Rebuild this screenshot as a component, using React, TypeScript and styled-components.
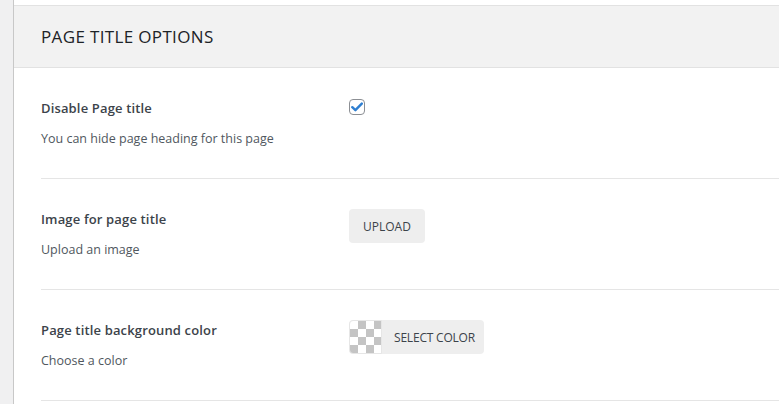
import * as React from "react";
import styled, { createGlobalStyle } from "styled-components";

const GlobalStyle = createGlobalStyle`
  html, body {
    margin: 0;
    padding: 0;
    background: #ffffff;
  }
  body {
    font-family: "Open Sans", "Noto Sans", sans-serif;
    color: #3c434a;
  }
`;

const rows = [
  {
    label: "Disable Page title",
    desc: "You can hide page heading for this page",
    control: "checkbox",
  },
  {
    label: "Image for page title",
    desc: "Upload an image",
    control: "upload",
  },
  {
    label: "Page title background color",
    desc: "Choose a color",
    control: "color",
  },
];

const CheckMark = () => (
  <svg width="12" height="10" viewBox="0 0 12 10">
    <path
      d="M1.3 5.2 L4.4 8.2 L10.8 1.6"
      fill="none"
      stroke="#2f7fd1"
      strokeWidth="2.4"
      strokeLinecap="round"
      strokeLinejoin="round"
    />
  </svg>
);

const App = () => {
  return (
    <>
      <GlobalStyle />
      <Page>
        <Sidebar />
        <Panel>
          <Header>
            <h2>PAGE TITLE OPTIONS</h2>
          </Header>
          <Body>
            {rows.map((row) => (
              <Row key={row.label}>
                <Info>
                  <Label>{row.label}</Label>
                  <Desc>{row.desc}</Desc>
                </Info>
                <Control>
                  {row.control === "checkbox" && (
                    <Checkbox>
                      <CheckMark />
                    </Checkbox>
                  )}
                  {row.control === "upload" && <Button>UPLOAD</Button>}
                  {row.control === "color" && (
                    <ColorButton>
                      <Swatch />
                      <span>SELECT COLOR</span>
                    </ColorButton>
                  )}
                </Control>
              </Row>
            ))}
          </Body>
        </Panel>
      </Page>
    </>
  );
};

export default App;

const Page = styled.div`
  display: flex;
  width: 779px;
  height: 404px;
  overflow: hidden;
`;

const Sidebar = styled.div`
  width: 13px;
  flex-shrink: 0;
  background: #f0f0f1;
  border-right: 1px solid #c8c8c8;
`;

const Panel = styled.div`
  flex: 1;
  padding-top: 5px;
  background: #fff;
`;

const Header = styled.div`
  height: 61px;
  display: flex;
  align-items: center;
  padding-left: 27px;
  background: #f2f2f2;
  border-top: 1px solid #e2e2e2;
  border-bottom: 1px solid #e2e2e2;

  h2 {
    margin: 0;
    font-size: 17px;
    font-weight: 500;
    color: #1d2327;
    letter-spacing: 0.35px;
  }
`;

const Body = styled.div`
  padding-left: 27px;
`;

const Row = styled.div`
  display: flex;
  padding: 30px 0 29px;
  border-bottom: 1px solid #e5e5e5;
`;

const Info = styled.div`
  width: 308px;
  flex-shrink: 0;
`;

const Label = styled.div`
  font-size: 13px;
  line-height: 20px;
  font-weight: 600;
  letter-spacing: 0.15px;
  color: #3c434a;
`;

const Desc = styled.div`
  margin-top: 11px;
  font-size: 12.5px;
  line-height: 20px;
  color: #50575e;
`;

const Control = styled.div`
  display: flex;
  align-items: flex-start;
`;

const Checkbox = styled.div`
  margin-top: 1px;
  width: 16px;
  height: 16px;
  box-sizing: border-box;
  border: 1px solid #8c8f94;
  border-radius: 4px;
  display: flex;
  align-items: center;
  justify-content: center;
  background: #fff;
`;

const Button = styled.div`
  height: 34px;
  padding: 0 14px;
  display: flex;
  align-items: center;
  background: #eeeeee;
  border-radius: 4px;
  font-size: 12px;
  color: #3c434a;
`;

const ColorButton = styled(Button)`
  padding: 0 9px 0 0;
  gap: 12px;
  letter-spacing: -0.2px;
  overflow: hidden;
`;

const Swatch = styled.div`
  width: 33px;
  height: 34px;
  box-sizing: border-box;
  border: 1px solid #e6e6e6;
  border-radius: 4px 0 0 4px;
  background: repeating-conic-gradient(#c4c4c4 0 25%, #fff 0 50%) 0 0 / 16px
    16px;
`;
